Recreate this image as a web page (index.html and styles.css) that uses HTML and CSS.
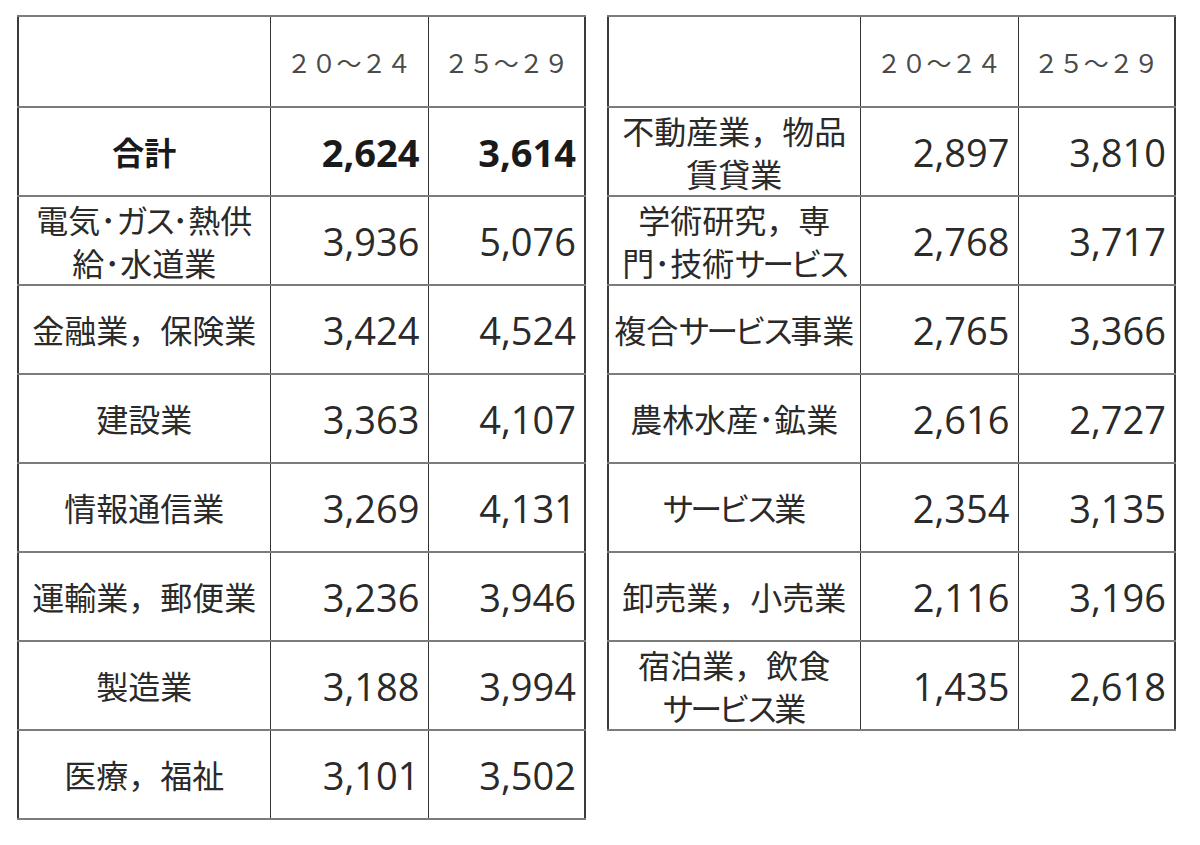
FILE: index.html
```html
<!DOCTYPE html>
<html lang="ja">
<head>
<meta charset="utf-8">
<title>産業別 初任給</title>
<link rel="stylesheet" href="styles.css">
</head>
<body>
<div class="page">
  <table class="tbl tbl-left">
    <colgroup><col class="c-label"><col class="c-num"><col class="c-num2"></colgroup>
    <thead>
      <tr class="head"><th></th><th>２０～２４</th><th>２５～２９</th></tr>
    </thead>
    <tbody>
      <tr class="total"><td class="label">合計</td><td class="num">2,624</td><td class="num">3,614</td></tr>
      <tr><td class="label">電気･<span class="kana">ガス</span>･熱供<br>給･水道業</td><td class="num">3,936</td><td class="num">5,076</td></tr>
      <tr><td class="label">金融業，保険業</td><td class="num">3,424</td><td class="num">4,524</td></tr>
      <tr><td class="label">建設業</td><td class="num">3,363</td><td class="num">4,107</td></tr>
      <tr><td class="label">情報通信業</td><td class="num">3,269</td><td class="num">4,131</td></tr>
      <tr><td class="label">運輸業，郵便業</td><td class="num">3,236</td><td class="num">3,946</td></tr>
      <tr><td class="label">製造業</td><td class="num">3,188</td><td class="num">3,994</td></tr>
      <tr><td class="label">医療，福祉</td><td class="num">3,101</td><td class="num">3,502</td></tr>
    </tbody>
  </table>
  <table class="tbl tbl-right">
    <colgroup><col class="c-label r"><col class="c-num"><col class="c-num2"></colgroup>
    <thead>
      <tr class="head"><th></th><th>２０～２４</th><th>２５～２９</th></tr>
    </thead>
    <tbody>
      <tr><td class="label">不動産業，物品<br>賃貸業</td><td class="num">2,897</td><td class="num">3,810</td></tr>
      <tr><td class="label">学術研究，専<br>門･技術<span class="kana">サービス</span></td><td class="num">2,768</td><td class="num">3,717</td></tr>
      <tr><td class="label">複合<span class="kana">サービス</span>事業</td><td class="num">2,765</td><td class="num">3,366</td></tr>
      <tr><td class="label">農林水産･鉱業</td><td class="num">2,616</td><td class="num">2,727</td></tr>
      <tr><td class="label"><span class="kana">サービス</span>業</td><td class="num">2,354</td><td class="num">3,135</td></tr>
      <tr><td class="label">卸売業，小売業</td><td class="num">2,116</td><td class="num">3,196</td></tr>
      <tr><td class="label">宿泊業，飲食<br><span class="kana">サービス</span>業</td><td class="num">1,435</td><td class="num">2,618</td></tr>
    </tbody>
  </table>
</div>
</body>
</html>
```
FILE: styles.css
```css
html, body {
  margin: 0;
  padding: 0;
  background: #ffffff;
}

.page {
  display: flex;
  align-items: flex-start;
  gap: 21px;
  padding: 15px 0 0 17px;
  font-family: "Noto Sans CJK JP", "Noto Sans", sans-serif;
  color: #2a2a2a;
}

.tbl {
  border-collapse: collapse;
  table-layout: fixed;
  border: 2px solid #3a3a3a;
}

.tbl-left { width: 567px; }
.tbl-right { width: 567px; }

.c-label { width: 252px; }
.c-num { width: 158px; }
.c-num2 { width: 157px; }

.tbl th,
.tbl td {
  padding: 0;
  border-left: 1px solid #333333;
  border-right: 1px solid #333333;
  border-top: 2px solid #7c7c7c;
  border-bottom: 2px solid #7c7c7c;
  vertical-align: middle;
}

.head {
  height: 91px;
}

.head th {
  font-family: "Noto Sans CJK JP", sans-serif;
  font-weight: 400;
  font-size: 25px;
  color: #4a4a4a;
  text-align: center;
}

tbody tr {
  height: 89px;
}

.label {
  text-align: center;
  font-size: 32px;
  line-height: 43px;
  white-space: nowrap;
}

.kana {
  letter-spacing: -4px;
}

.num {
  text-align: right;
  padding-right: 8px !important;
  font-family: "Open Sans", "Noto Sans", sans-serif;
  font-size: 38px;
  color: #2a2a2a;
}

.total .label,
.total .num {
  font-weight: 700;
  color: #1a1a1a;
}
```
